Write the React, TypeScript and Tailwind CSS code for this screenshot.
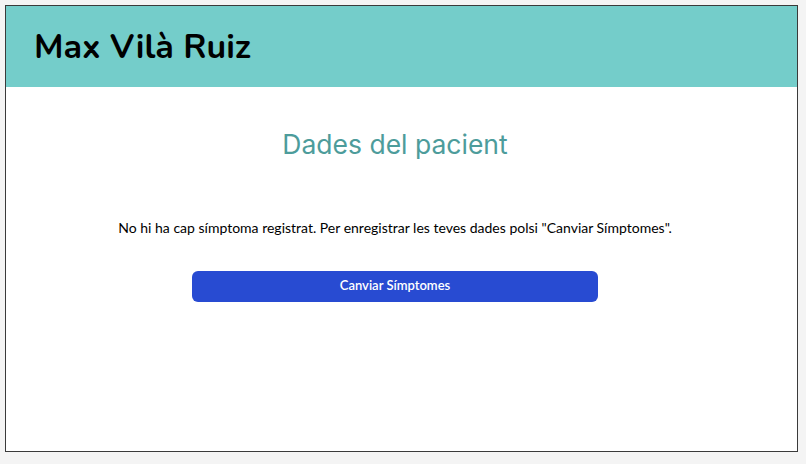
export default function App() {
    return (
        <div className="min-h-[464px] w-[806px] bg-[#f4f4f4] pt-[5px] pl-[5px]">
            <div className="flex h-[447px] w-[793px] flex-col border border-[#3a3a3a] bg-white">
                <header className="flex h-[81px] items-center bg-[#74cdca] pl-[28px]">
                    <h1 className="font-['Nunito','Lato',sans-serif] text-[34px] font-bold leading-none text-black">
                        Max Vilà Ruiz
                    </h1>
                </header>

                <main className="flex flex-col items-center pr-[13px] font-['Lato',sans-serif]">
                    <h2 className="mt-[44px] font-['Inter',sans-serif] text-[26.5px] font-normal leading-none text-[#4d9c9b]">
                        Dades del pacient
                    </h2>
                    <p className="mt-[63px] text-[14px] leading-none text-black">
                        No hi ha cap símptoma registrat. Per enregistrar les teves dades polsi "Canviar Símptomes".
                    </p>
                    <button className="mt-[36px] h-[31px] w-[406px] rounded-md bg-[#284bd2] text-[13px] font-semibold text-white">
                        Canviar Símptomes
                    </button>
                </main>
            </div>
        </div>
    );
}
